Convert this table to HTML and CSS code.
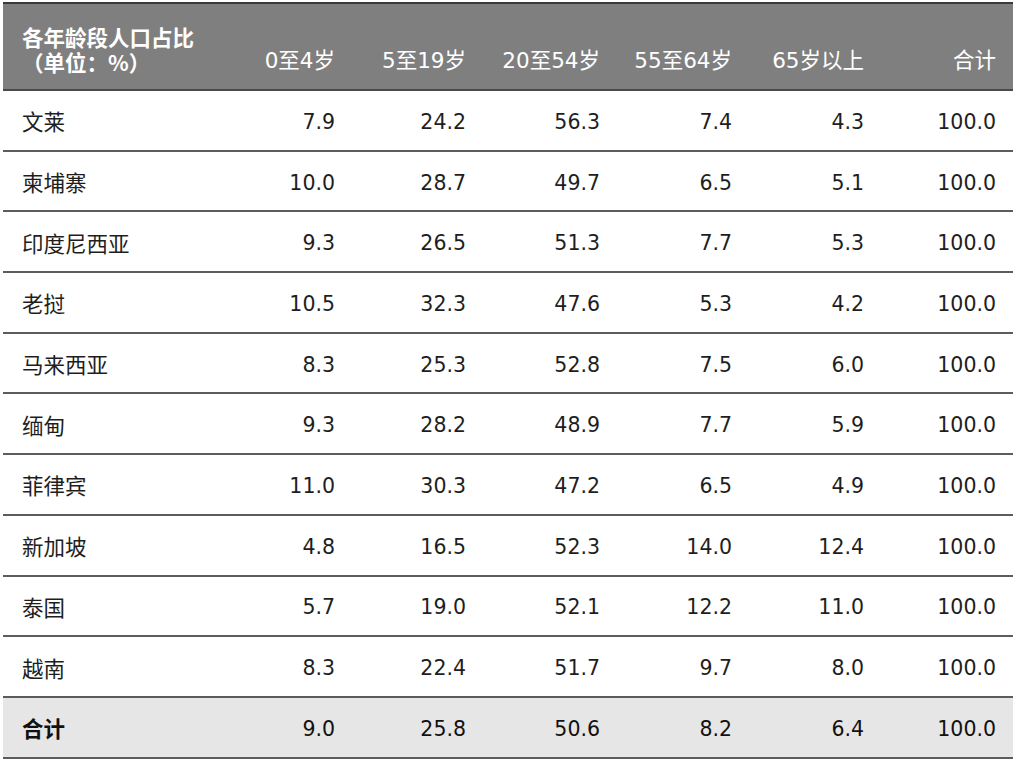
FILE: index.html
```html
<!DOCTYPE html>
<html lang="zh">
<head>
<meta charset="utf-8">
<link rel="stylesheet" href="styles.css">
</head>
<body>
<table class="age-table">
  <colgroup>
    <col class="c-name">
    <col class="c-a">
    <col class="c-b">
    <col class="c-c">
    <col class="c-d">
    <col class="c-e">
    <col class="c-f">
  </colgroup>
  <thead>
    <tr>
      <th class="title"><span class="t-line">各年龄段人口占比</span><span class="t-line">（单位：%）</span></th>
      <th>0至4岁</th>
      <th>5至19岁</th>
      <th>20至54岁</th>
      <th>55至64岁</th>
      <th>65岁以上</th>
      <th>合计</th>
    </tr>
  </thead>
  <tbody>
    <tr><td>文莱</td><td>7.9</td><td>24.2</td><td>56.3</td><td>7.4</td><td>4.3</td><td>100.0</td></tr>
    <tr><td>柬埔寨</td><td>10.0</td><td>28.7</td><td>49.7</td><td>6.5</td><td>5.1</td><td>100.0</td></tr>
    <tr><td>印度尼西亚</td><td>9.3</td><td>26.5</td><td>51.3</td><td>7.7</td><td>5.3</td><td>100.0</td></tr>
    <tr><td>老挝</td><td>10.5</td><td>32.3</td><td>47.6</td><td>5.3</td><td>4.2</td><td>100.0</td></tr>
    <tr><td>马来西亚</td><td>8.3</td><td>25.3</td><td>52.8</td><td>7.5</td><td>6.0</td><td>100.0</td></tr>
    <tr><td>缅甸</td><td>9.3</td><td>28.2</td><td>48.9</td><td>7.7</td><td>5.9</td><td>100.0</td></tr>
    <tr><td>菲律宾</td><td>11.0</td><td>30.3</td><td>47.2</td><td>6.5</td><td>4.9</td><td>100.0</td></tr>
    <tr><td>新加坡</td><td>4.8</td><td>16.5</td><td>52.3</td><td>14.0</td><td>12.4</td><td>100.0</td></tr>
    <tr><td>泰国</td><td>5.7</td><td>19.0</td><td>52.1</td><td>12.2</td><td>11.0</td><td>100.0</td></tr>
    <tr><td>越南</td><td>8.3</td><td>22.4</td><td>51.7</td><td>9.7</td><td>8.0</td><td>100.0</td></tr>
    <tr class="total"><td>合计</td><td>9.0</td><td>25.8</td><td>50.6</td><td>8.2</td><td>6.4</td><td>100.0</td></tr>
  </tbody>
</table>
</body>
</html>
```

FILE: styles.css
```css
html, body {
  margin: 0;
  padding: 0;
  background: #ffffff;
}

body {
  padding: 2px 0 0 3px;
  font-family: "DejaVu Sans", Verdana, "Noto Sans CJK SC", sans-serif;
  font-size: 20.5px;
  color: #1e1e1e;
}

.age-table {
  width: 1010px;
  border-collapse: collapse;
  table-layout: fixed;
  border-top: 2px solid #3a3a3a;
}

.c-name { width: 215px; }
.c-a { width: 134px; }
.c-b { width: 131px; }
.c-c { width: 134px; }
.c-d { width: 132px; }
.c-e { width: 132px; }
.c-f { width: 132px; }

.age-table th {
  background: #7f7f7f;
  color: #ffffff;
  font-weight: normal;
  font-size: 21.5px;
  text-align: right;
  vertical-align: bottom;
  height: 87px;
  padding: 0 17px 15px 0;
  line-height: 26px;
  border-bottom: 2px solid #4a4a4a;
  box-sizing: border-box;
  white-space: nowrap;
}

.age-table th.title {
  text-align: left;
  font-weight: bold;
  font-size: 21.5px;
  padding-left: 19px;
  font-family: "Noto Sans CJK SC", sans-serif;
}

.t-line {
  display: block;
  height: 25px;
  line-height: 25px;
}

.age-table td {
  height: 60.7px;
  padding: 3px 17px 0 0;
  text-align: right;
  vertical-align: middle;
  border-bottom: 2px solid #5c5c5c;
  box-sizing: border-box;
}

.age-table td:first-child {
  text-align: left;
  padding: 1px 0 0 19px;
  font-size: 21.5px;
  font-family: "Noto Sans CJK SC", sans-serif;
}

.age-table tr.total td {
  background: #e6e6e6;
  color: #111111;
  border-top: 2px solid #5c5c5c;
}

.age-table tr.total td:first-child {
  font-weight: bold;
}
```
